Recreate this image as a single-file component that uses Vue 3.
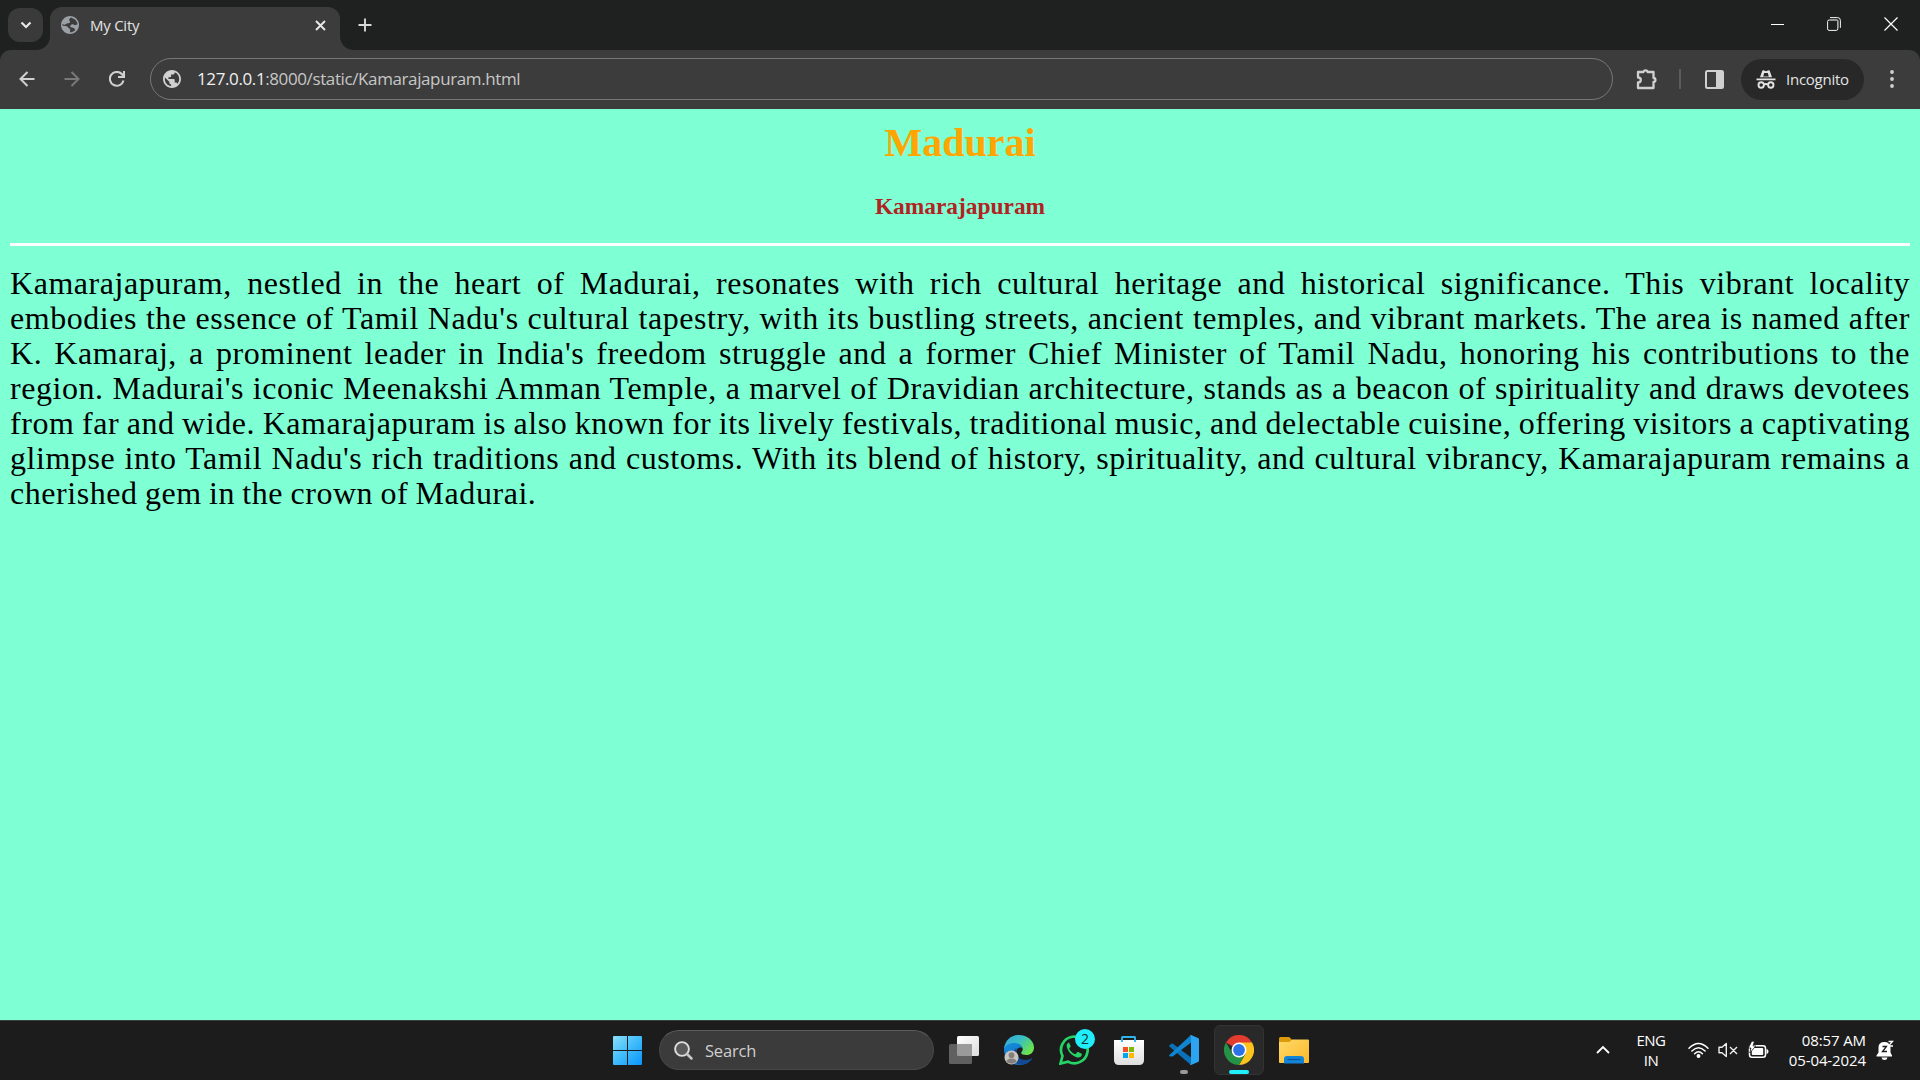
<script setup>
const lines = [
  'Kamarajapuram, nestled in the heart of Madurai, resonates with rich cultural heritage and historical significance. This vibrant locality',
  "embodies the essence of Tamil Nadu's cultural tapestry, with its bustling streets, ancient temples, and vibrant markets. The area is named after",
  "K. Kamaraj, a prominent leader in India's freedom struggle and a former Chief Minister of Tamil Nadu, honoring his contributions to the",
  "region. Madurai's iconic Meenakshi Amman Temple, a marvel of Dravidian architecture, stands as a beacon of spirituality and draws devotees",
  'from far and wide. Kamarajapuram is also known for its lively festivals, traditional music, and delectable cuisine, offering visitors a captivating',
  "glimpse into Tamil Nadu's rich traditions and customs. With its blend of history, spirituality, and cultural vibrancy, Kamarajapuram remains a",
  'cherished gem in the crown of Madurai.',
]
</script>

<template>
  <div class="screen">
    <header class="strip">
      <button class="tab-search">
        <svg width="12" height="8" viewBox="0 0 12 8"><path d="M1.5 1.5 6 6l4.500-4.500" fill="none" stroke="#e8e8e8" stroke-width="2.200" /></svg>
      </button>
      <div class="tab">
        <svg class="foot foot-l" width="14" height="14" viewBox="0 0 14 14"><path d="M14 0v14H0C8 14 14 8 14 0Z" fill="#3c3c3c" /></svg>
        <svg class="favicon" width="20" height="20" viewBox="2 2 20 20">
          <path fill="#9aa0a6" d="M12 2C6.480 2 2 6.480 2 12s4.480 10 10 10 10-4.480 10-10S17.520 2 12 2Z" />
          <path fill="#3c3c3c" d="M13 3.700c-1.200 1-1.900 1.700-1.900 2.800 0 1 .9 1 1 1.900.1 1.300-1.500 1.700-2.900 1.700-1.300 0-1.300 1.400-3.100 1.500-1 .1-1.800-.3-2.500-.8v1.900c2.100.4 4.100.4 5.400.9 1.200.5 1 2.200 2.300 2.300.7.1.8.6.8 1.400v2.900c3.200-.1 4.500-1.200 5.900-2.800-.9-.7-.8-1.500-1.900-2.100-1.400-.7-3.200-.1-3.700-1.300-.5-1.300.8-2.500 2.200-2.800 1.500-.3 1.800.8 3.100.9 1 .1 1.800-.4 2.700-.9-.4-2.400-1.600-4.400-3.300-5.700Z" />
        </svg>
        <span class="tab-title">My City</span>
        <svg class="tab-close" width="11" height="11" viewBox="0 0 11 11"><path d="m1 1 9 9M10 1l-9 9" stroke="#e8e8e8" stroke-width="1.900" /></svg>
        <svg class="foot foot-r" width="14" height="14" viewBox="0 0 14 14"><path d="M0 0v14h14C6 14 0 8 0 0Z" fill="#3c3c3c" /></svg>
      </div>
      <svg class="new-tab" width="14" height="14" viewBox="0 0 14 14"><path d="M7 .5v13M.5 7h13" stroke="#d8d8d8" stroke-width="1.900" /></svg>
      <div class="win-controls">
        <svg width="13" height="13" viewBox="0 0 13 13"><path d="M0 6.500h13" stroke="#fff" /></svg>
        <svg width="14" height="14" viewBox="0 0 14 14" fill="none" stroke="#f5f5f5"><rect x=".6" y="3" width="10.200" height="10.400" rx="1.500" /><path d="M3 .6h7.600a2.800 2.800 0 0 1 2.800 2.800v7.400" /><path d="M3 3h8v8" stroke="#999" stroke-width="1" /></svg>
        <svg width="14" height="14" viewBox="0 0 14 14"><path d="m.5.5 13 13m0-13-13 13" stroke="#fff" stroke-width="1.200" /></svg>
      </div>
    </header>

    <div class="toolbar-back">
      <nav class="toolbar">
        <svg class="nav" width="16" height="16" viewBox="0 0 16 16" fill="none" stroke="#d0d0d0" stroke-width="2"><path d="M15.500 8H1.800M8.500 1 1.500 8l7 7" /></svg>
        <svg class="nav" width="16" height="16" viewBox="0 0 16 16" fill="none" stroke="#797979" stroke-width="2"><path d="M.5 8h13.700M7.500 1l7 7-7 7" /></svg>
        <svg class="nav" width="16" height="16" viewBox="0 0 16 16" fill="none" stroke="#d0d0d0" stroke-width="2.100"><path d="M14.500 9.500A6.900 6.900 0 1 1 13 3.300l1.500 1.700" /><path d="M15 0v6H9" /></svg>
        <div class="omnibox">
          <svg width="18" height="18" viewBox="2 2 20 20"><path fill="#d0d0d0" d="M12 2C6.480 2 2 6.480 2 12s4.480 10 10 10 10-4.480 10-10S17.520 2 12 2zm-1 17.930c-3.950-.49-7-3.850-7-7.930 0-.62.080-1.210.210-1.790L9 15v1c0 1.100.9 2 2 2v1.930zm6.900-2.540c-.26-.81-1-1.390-1.900-1.390h-1v-3c0-.55-.45-1-1-1H8v-2h2c.55 0 1-.45 1-1V7h2c1.100 0 2-.9 2-2v-.41c2.930 1.190 5 4.060 5 7.410 0 2.080-.8 3.970-2.100 5.390z" /></svg>
          <span class="url"><b>127.0.0.1</b>:8000/static/Kamarajapuram.html</span>
        </div>
        <svg class="puzzle" width="22" height="22" viewBox="0 0 22 22"><path d="M2 4h5.500a2 1.700 0 0 1 4 0H17.500v6a1.900 2 0 0 1 0 4v6H2v-5.500c1.800 0 2.800-1 2.800-2.500S3.800 9.500 2 9.500Z" fill="none" stroke="#d0d0d0" stroke-width="2.300" stroke-linejoin="round" /></svg>
        <i class="divider"></i>
        <svg class="panel" width="19" height="19" viewBox="0 0 19 19"><rect x="1" y="1" width="17" height="17" rx="1.500" fill="none" stroke="#d0d0d0" stroke-width="2" /><path d="M11 1h7v17h-7z" fill="#d0d0d0" /></svg>
        <div class="incognito">
          <svg width="20" height="19" viewBox="0 0 20 19"><path d="M.5 8.500h19v1.700H.5zM4 7.300 6.300.8c.2-.5.7-.7 1.200-.5L10 1.200l2.500-.9c.5-.2 1 0 1.200.5L16 7.300Z" fill="#e3e3e3" /><path d="M8.200 3h3.600l1 3.500H7.200Z" fill="#282828" /><g fill="none" stroke="#e3e3e3" stroke-width="1.900"><circle cx="5.200" cy="15" r="2.700" /><circle cx="14.800" cy="15" r="2.700" /><path d="M7.900 14.600q2.100-1.200 4.200 0" /></g></svg>
          <span>Incognito</span>
        </div>
        <svg class="dots" width="4" height="18" viewBox="0 0 4 18" fill="#d0d0d0"><circle cx="2" cy="2" r="1.900" /><circle cx="2" cy="9" r="1.900" /><circle cx="2" cy="16" r="1.900" /></svg>
      </nav>
    </div>

    <main class="page">
      <h1>Madurai</h1>
      <h3>Kamarajapuram</h3>
      <hr />
      <p><span v-for="line in lines" :key="line" class="line">{{ line }}</span></p>
    </main>

    <footer class="taskbar">
      <svg class="start" width="29" height="29" viewBox="0 0 29 29">
        <defs><linearGradient id="win" x1="0" y1="0" x2="29" y2="29" gradientUnits="userSpaceOnUse"><stop stop-color="#8be0fb" /><stop offset=".5" stop-color="#3fbcfb" /><stop offset="1" stop-color="#0a94fb" /></linearGradient></defs>
        <path fill="url(#win)" d="M1 0h13v14H0V1q0-1 1-1ZM15 0h13q1 0 1 1v13H15ZM0 15h14v14H1q-1 0-1-1ZM15 15h14v13q0 1-1 1H15Z" />
      </svg>
      <div class="search">
        <svg width="19" height="19" viewBox="0 0 19 19"><circle cx="8" cy="8" r="6.900" fill="#5a5a5a" stroke="#dedede" stroke-width="1.900" /><path d="m13 13 4.500 4.500" stroke="#c8c8c8" stroke-width="2.500" stroke-linecap="round" /></svg>
        <span>Search</span>
      </div>
      <div class="apps">
        <div class="app">
          <svg width="30" height="30" viewBox="0 0 30 30"><defs><linearGradient id="tv" x2="1" y2="1"><stop stop-color="#fff" /><stop offset="1" stop-color="#dcdcdc" /></linearGradient></defs><rect x="8" y="1" width="22" height="20" rx="1.500" fill="url(#tv)" /><rect x="0" y="9" width="23" height="20" rx="1.500" fill="#666" fill-opacity=".92" /><path d="M8 9h15v12H9.500Q8 21 8 19.500Z" fill="#9a9a9a" /></svg>
        </div>
        <div class="app">
          <svg width="30" height="30" viewBox="0 0 30 30">
            <defs>
              <linearGradient id="eg" x2="1" y2=".6"><stop stop-color="#35a5e0" /><stop offset=".5" stop-color="#38bdc4" /><stop offset="1" stop-color="#6be34d" /></linearGradient>
              <linearGradient id="eb" x2=".8" y2="1"><stop stop-color="#1590e0" /><stop offset="1" stop-color="#1267b8" /></linearGradient>
            </defs>
            <path d="M0 14C0 9 5 7 10 7c5 0 9 3 9 6-3-1.500-7 .5-7 4.500 0 4.500 5 8.500 10 8 3-.2 5.500-1.500 6.500-2.500C25 28 20.500 30 15 30 6 30 0 23 0 14Z" fill="url(#eb)" />
            <path d="M12.500 13C7 16 8 29.500 17 29.800c5 0 9-2.500 11.500-6.800-7 4-16 1.500-16-5.500Z" fill="#144a94" />
            <path d="M0 14C1 5 7 0 15 0c8.500 0 15 6 15 12.500 0 5-3.800 7.500-7.500 7.500-3.500 0-5.300-1-5.300-2.300 0-.9 1.500-1.400 1.500-3.500C18.700 10.500 14.500 8 10.500 8 5 8 1.500 10.500 0 14Z" fill="url(#eg)" />
            <circle cx="7.500" cy="22.500" r="7" fill="#c9c5c1" /><circle cx="7.500" cy="20.200" r="2.900" fill="#85807c" /><path d="M2.500 27q0-3.500 5-3.500t5 3.500q-4.600 3.500-10 0Z" fill="#85807c" />
          </svg>
        </div>
        <div class="app">
          <svg width="30" height="30" viewBox="0 0 30 30"><path d="M1.500 28.500 3.500 21A13.300 13.300 0 1 1 9 26.600Z" fill="none" stroke="#25d366" stroke-width="2.700" /><path d="M9.500 7.700c-1.600.8-2.200 2.400-1.700 4.300 1.400 5.200 5.200 8.800 10.400 10.400 2.100.6 4.300-.6 4.600-2.600.1-.7 0-1-.6-1.300l-2.900-1.400c-.6-.3-.9-.2-1.300.3l-1.100 1.400c-.3.400-.7.4-1.200.2-2.400-1.100-4-2.600-5.300-4.800-.3-.5-.2-.8.1-1.100l.9-1.200c.3-.4.3-.7.1-1.200l-1.200-2.500c-.2-.5-.4-.7-.8-.5Z" fill="#25d366" /></svg>
          <span class="badge">2</span>
        </div>
        <div class="app">
          <svg width="30" height="30" viewBox="0 0 30 30"><defs><linearGradient id="st" x2="0" y2="1"><stop stop-color="#fff" /><stop offset="1" stop-color="#dedede" /></linearGradient></defs><path d="M0 5h30v20q0 5-5 5H5q-5 0-5-5Z" fill="url(#st)" /><path d="M8 7V2.500Q8 2 8.500 2h12q.5 0 .5.5V7" fill="none" stroke="#2fb4ee" stroke-width="1.900" /><path d="M9 12h5v5H9z" fill="#f25022" /><path d="M15 12h5v5h-5z" fill="#7fba00" /><path d="M9 18h5v5H9z" fill="#00a4ef" /><path d="M15 18h5v5h-5z" fill="#ffb900" /></svg>
        </div>
        <div class="app">
          <svg width="30" height="30" viewBox="0 0 30 30"><path d="M.6 10.200 2.300 8.700q.8-.6 1.700 0L22 22.500V30L.6 11.800q-.9-.8 0-1.600Z" fill="#0a70b8" /><path d="M.6 19.800 22 0v7.500L4 21.300q-.9.7-1.700 0L.6 21.400q-.9-.8 0-1.600Z" fill="#0f86d1" /><path d="M22 0l7 3q1 .4 1 1.500v21q0 1-1 1.500l-7 3-1.500-.6q1.500.2 1.500-1.400V2Q22 .4 20.500.6Z" fill="#2da4f2" /></svg>
          <i class="mark idle"></i>
        </div>
        <div class="app active">
          <svg width="30" height="30" viewBox="0 0 30 30"><path d="M15 15 2 7.500A15 15 0 0 1 28 7.500Z" fill="#e33b2e" /><path d="M15 7.500h13A15 15 0 0 1 15 30l6.500-11.250Z" fill="#fcc31e" /><path d="M2 7.500A15 15 0 0 0 15 30l6.500-11.250L15 15l-6.500 3.750Z" fill="#269245" /><circle cx="15" cy="15" r="7.500" fill="#fff" /><circle cx="15" cy="15" r="5.900" fill="#2a73e8" /></svg>
          <i class="mark"></i>
        </div>
        <div class="app">
          <svg width="30" height="30" viewBox="0 0 30 30"><defs><linearGradient id="fo" x2="1" y2="1"><stop stop-color="#ffda68" /><stop offset="1" stop-color="#fcb82a" /></linearGradient></defs><path d="M0 9V3.500Q0 2 1.500 2h8q.8 0 1.400.6L13 5l-3 4Z" fill="#dd9b0c" /><path d="M0 7h10.500l2.500-2.500h16q1 0 1 1V27q0 1-1 1H1q-1 0-1-1Z" fill="url(#fo)" /><path d="M5 28.500V24q0-3 3-3h14q3 0 3 3v4.500Z" fill="#1484d8" /><path d="M8.500 24.500h13" stroke="#0b559f" stroke-width="1.200" /></svg>
        </div>
      </div>
      <div class="tray">
        <svg class="chev" width="14" height="9" viewBox="0 0 14 9"><path d="m1 8 6-6 6 6" fill="none" stroke="#fff" stroke-width="1.800" /></svg>
        <div class="lang">ENG<br />IN</div>
        <svg class="wifi" width="21" height="16" viewBox="0 0 21 16" fill="none" stroke="#fff" stroke-width="1.500" stroke-linecap="round"><path d="M1 6.300q9.500-9.600 19 0M3.900 9q6.600-6.600 13.200 0M6.600 11.700q3.900-3.800 7.800 0" /><circle cx="10.500" cy="14" r="1.200" fill="#fff" /></svg>
        <svg class="vol" width="20" height="16" viewBox="0 0 20 16" fill="none" stroke="#eee" stroke-width="1.400" stroke-linejoin="round"><path d="M1 5.300h3L8.300 1.500v13L4 10.700H1ZM12 5l7 7m0-7-7 7" /></svg>
        <svg class="bat" width="21" height="18" viewBox="0 0 21 18"><rect x="1.500" y="4.700" width="16" height="11.600" rx="2.500" fill="none" stroke="#fff" stroke-width="1.500" /><rect x="3.800" y="7" width="11.400" height="7" rx=".8" fill="#fff" /><path d="M18.500 8q2 .3 2 2.500t-2 2.500Z" fill="#fff" /><path d="M3.700.2.3 7h2.600L1.800 12l6-7.100H5L6.500.2Z" fill="#fff" stroke="#1c1c1c" stroke-width=".8" /></svg>
        <div class="clock">08:57 AM<br />05-04-2024</div>
        <svg class="bell" width="18" height="20" viewBox="0 0 18 20"><path d="M2.500 7.500q0-5.500 6-5.500 5.500 0 6 5.500v5l1.500 3v1H.5v-1l2-3ZM5.500 17.500h6Q11 20 8.500 20t-3-2.500Z" fill="#fff" /><path d="M11 0h7v6h-4Z" fill="#1c1c1c" /><path d="M6.500 6.500h4L6.500 11.500h4.500" fill="none" stroke="#1c1c1c" stroke-width="1.300" /><path d="M12.500 1.500h4l-4 4.500h4.500" fill="none" stroke="#fff" stroke-width="1.300" /></svg>
      </div>
    </footer>
  </div>
</template>

<style>
body { margin: 0; overflow: hidden; }
</style>

<style scoped>
.screen { width: 1920px; height: 1080px; display: flex; flex-direction: column; background: #7fffd4; font-family: "Open Sans", "Noto Sans", sans-serif; overflow: hidden; }
svg { display: block; flex: none; }
.strip { height: 50px; flex: none; background: #1f2120; display: flex; align-items: flex-start; }
.tab-search { width: 35px; height: 34px; margin: 8px 7px 0 8px; padding: 0; border: 0; border-radius: 12px; background: #3a3a3a; display: flex; align-items: center; justify-content: center; flex: none; }
.tab { position: relative; box-sizing: border-box; width: 290px; height: 43px; margin-top: 7px; padding: 0 14px 7px 11px; display: flex; align-items: center; background: #3c3c3c; border-radius: 12px 12px 0 0; }
.foot { position: absolute; bottom: 0; }
.foot-l { left: -14px; }
.foot-r { right: -14px; }
.favicon { width: 18px; height: 18px; }
.tab-title { margin-left: 11px; color: #e3e3e3; font-size: 15px; letter-spacing: -0.25px; line-height: 20px; }
.tab-close { margin-left: auto; }
.new-tab { margin: 18px 0 0 18px; width: 14px; }
.win-controls { margin: 17px 22px 0 auto; display: flex; align-items: center; gap: 43px; }
.toolbar-back { flex: none; background: #1f2120; }
.toolbar { box-sizing: border-box; height: 59px; padding-bottom: 1px; background: #3c3c3c; border-radius: 11px 11px 0 0; display: flex; align-items: center; }
.nav { margin-left: 29px; }
.nav:first-child { margin-left: 19px; }
.omnibox { box-sizing: border-box; width: 1463px; height: 42px; margin-left: 25px; padding-left: 12px; border: 1px solid #777; border-radius: 21px; display: flex; align-items: center; }
.url { margin-left: 16px; color: #c7c7c7; font-size: 17px; letter-spacing: -0.39px; line-height: 24px; white-space: nowrap; }
.url b { font-weight: 400; color: #f0f0f0; }
.puzzle { margin-left: 23px; }
.divider { width: 2px; height: 20px; margin: 0 24px 0 21px; background: #5c5c5c; }
.incognito { box-sizing: border-box; width: 123px; height: 41px; margin-left: 17px; padding-left: 15px; border-radius: 21px; background: #282828; display: flex; align-items: center; color: #e3e3e3; font-size: 15px; letter-spacing: -0.25px; }
.incognito span { margin: -1px 0 0 10px; line-height: 20px; }
.dots { margin-left: 26px; }
.page { flex: 1; padding: 11px 10px 0; font-family: "Liberation Serif", serif; }
h1 { margin: 0; font-size: 40px; line-height: 46px; text-align: center; color: orange; }
h3 { margin: 27px 0 23px; font-size: 23.400px; line-height: 27px; text-align: center; color: #b22222; }
hr { height: 3px; margin: 0; border: 0; background: #fff; }
p { margin: 20px 0 0; font-family: Georgia, "Liberation Serif", serif; font-size: 32px; line-height: 35px; letter-spacing: 0.55px; color: #000; }
.line { display: block; word-spacing: -3px; text-align: justify; text-align-last: justify; }
.line:last-child { text-align-last: left; word-spacing: -1.200px; }
.taskbar { box-sizing: border-box; height: 60px; flex: none; background: #1c1c1c; border-top: 1px solid #37403d; display: flex; align-items: center; color: #fff; }
.start { margin-left: 613px; }
.search { box-sizing: border-box; width: 275px; height: 40px; margin-left: 17px; margin-top: -1px; padding-left: 14px; border: 1px solid #474747; border-top-color: #5c5c5c; border-radius: 20px; background: #3b3b3b; display: flex; align-items: center; color: #cfcfcf; }
.search span { margin-left: 12px; font-size: 16.500px; letter-spacing: -0.2px; }
.apps { display: flex; gap: 5px; margin-left: 5px; margin-top: -1px; }
.app { position: relative; box-sizing: border-box; width: 50px; height: 50px; display: flex; align-items: center; justify-content: center; }
.active { background: #292929; border: 1px solid #333; border-radius: 6px; }
.badge { position: absolute; left: 26px; top: 4px; width: 20px; height: 20px; border-radius: 50%; background: #20eefa; color: #12302f; font-size: 14px; line-height: 20px; text-align: center; }
.mark { position: absolute; bottom: 0; left: 14px; width: 20px; height: 4px; border-radius: 2px; background: #20f0fb; }
.idle { left: 21px; width: 8px; bottom: 1px; background: #9a9a9a; }
.tray { margin-left: auto; margin-right: 26px; margin-top: -2px; display: flex; align-items: center; font-size: 15px; line-height: 20px; }
.lang { width: 40px; margin-left: 21px; text-align: center; letter-spacing: -0.5px; }
.wifi { margin-left: 17px; }
.vol { margin-left: 9px; }
.bat { margin-left: 10px; }
.clock { width: 90px; margin-left: 7px; text-align: right; letter-spacing: -0.1px; }
.bell { margin-left: 10px; }
</style>
